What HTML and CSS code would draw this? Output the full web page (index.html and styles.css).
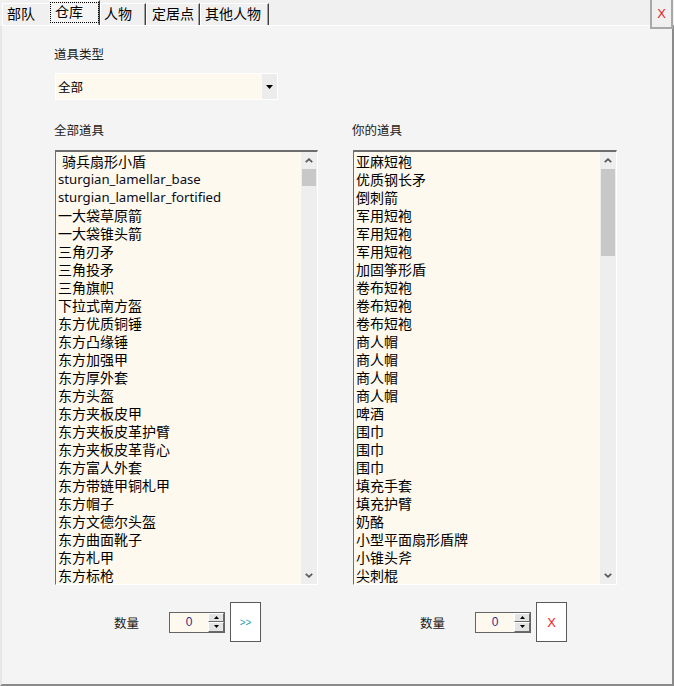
FILE: index.html
```html
<!DOCTYPE html>
<html lang="zh">
<head>
<meta charset="utf-8">
<title>仓库</title>
<link rel="stylesheet" href="styles.css">
</head>
<body>
<div class="window">
  <div class="tabbar">
    <div class="tab tab-1">部队</div>
    <div class="tab tab-2 active"><span class="focus">仓库</span></div>
    <div class="tab tab-3">人物</div>
    <div class="tab tab-4">定居点</div>
    <div class="tab tab-5">其他人物</div>
  </div>
  <button class="close">X</button>
  <div class="panel">
    <div class="filter">
      <div class="label">道具类型</div>
      <div class="select">
        <span class="select-value">全部</span>
        <span class="select-arrow"><svg width="7" height="4" viewBox="0 0 7 4"><path d="M0 0H7L3.5 4Z" fill="#000"/></svg></span>
      </div>
    </div>
    <div class="columns">
      <div class="column">
        <div class="label">全部道具</div>
        <div class="listbox">
          <ul class="items">
            <li> 骑兵扇形小盾</li>
            <li class="lat">sturgian_lamellar_base</li>
            <li class="lat">sturgian_lamellar_fortified</li>
            <li>一大袋草原箭</li>
            <li>一大袋锥头箭</li>
            <li>三角刃矛</li>
            <li>三角投矛</li>
            <li>三角旗帜</li>
            <li>下拉式南方盔</li>
            <li>东方优质铜锤</li>
            <li>东方凸缘锤</li>
            <li>东方加强甲</li>
            <li>东方厚外套</li>
            <li>东方头盔</li>
            <li>东方夹板皮甲</li>
            <li>东方夹板皮革护臂</li>
            <li>东方夹板皮革背心</li>
            <li>东方富人外套</li>
            <li>东方带链甲铜札甲</li>
            <li>东方帽子</li>
            <li>东方文德尔头盔</li>
            <li>东方曲面靴子</li>
            <li>东方札甲</li>
            <li>东方标枪</li>
          </ul>
          <div class="scrollbar">
            <div class="sb-btn"><svg width="8" height="5" viewBox="0 0 8 5"><path d="M0.8 4.2L4 1.2L7.2 4.2" fill="none" stroke="#5a5a5a" stroke-width="1.8"/></svg></div>
            <div class="track"><div class="thumb" style="height:17px"></div></div>
            <div class="sb-btn"><svg width="8" height="5" viewBox="0 0 8 5"><path d="M0.8 0.8L4 3.8L7.2 0.8" fill="none" stroke="#5a5a5a" stroke-width="1.8"/></svg></div>
          </div>
        </div>
        <div class="qty qty-left">
          <span class="qty-label">数量</span>
          <div class="spinner">
            <span class="spin-value">0</span>
            <div class="spin-btns">
              <span class="spin-btn"><svg width="5" height="3" viewBox="0 0 5 3"><path d="M0 3H5L2.5 0Z" fill="#000"/></svg></span>
              <span class="spin-btn"><svg width="5" height="3" viewBox="0 0 5 3"><path d="M0 0H5L2.5 3Z" fill="#000"/></svg></span>
            </div>
          </div>
          <button class="action action-move">&gt;&gt;</button>
        </div>
      </div>
      <div class="column">
        <div class="label">你的道具</div>
        <div class="listbox">
          <ul class="items">
            <li>亚麻短袍</li>
            <li>优质钢长矛</li>
            <li>倒刺箭</li>
            <li>军用短袍</li>
            <li>军用短袍</li>
            <li>军用短袍</li>
            <li>加固筝形盾</li>
            <li>卷布短袍</li>
            <li>卷布短袍</li>
            <li>卷布短袍</li>
            <li>商人帽</li>
            <li>商人帽</li>
            <li>商人帽</li>
            <li>商人帽</li>
            <li>啤酒</li>
            <li>围巾</li>
            <li>围巾</li>
            <li>围巾</li>
            <li>填充手套</li>
            <li>填充护臂</li>
            <li>奶酪</li>
            <li>小型平面扇形盾牌</li>
            <li>小锥头斧</li>
            <li>尖刺棍</li>
          </ul>
          <div class="scrollbar">
            <div class="sb-btn"><svg width="8" height="5" viewBox="0 0 8 5"><path d="M0.8 4.2L4 1.2L7.2 4.2" fill="none" stroke="#5a5a5a" stroke-width="1.8"/></svg></div>
            <div class="track"><div class="thumb" style="height:87px"></div></div>
            <div class="sb-btn"><svg width="8" height="5" viewBox="0 0 8 5"><path d="M0.8 0.8L4 3.8L7.2 0.8" fill="none" stroke="#5a5a5a" stroke-width="1.8"/></svg></div>
          </div>
        </div>
        <div class="qty qty-right">
          <span class="qty-label">数量</span>
          <div class="spinner">
            <span class="spin-value">0</span>
            <div class="spin-btns">
              <span class="spin-btn"><svg width="5" height="3" viewBox="0 0 5 3"><path d="M0 3H5L2.5 0Z" fill="#000"/></svg></span>
              <span class="spin-btn"><svg width="5" height="3" viewBox="0 0 5 3"><path d="M0 0H5L2.5 3Z" fill="#000"/></svg></span>
            </div>
          </div>
          <button class="action action-remove">X</button>
        </div>
      </div>
    </div>
  </div>
</div>
</body>
</html>
```
FILE: styles.css
```css
* { box-sizing: border-box; }
html, body { margin: 0; padding: 0; }
body {
  width: 674px;
  height: 686px;
  background: #f0f0f0;
  font-family: "Liberation Sans", "Noto Sans CJK SC", sans-serif;
  color: #000;
  overflow: hidden;
}
.window {
  position: relative;
  width: 674px;
  height: 686px;
  display: flex;
  flex-direction: column;
}
.tabbar {
  height: 25px;
  display: flex;
  align-items: flex-end;
  padding-left: 2px;
  font-size: 14px;
}
.tab {
  height: 22px;
  line-height: 20px;
  background: #f0f0f0;
  border-top: 1px solid #ffffff;
  border-left: 1px solid #ffffff;
  border-right: 1px solid #404040;
  box-shadow: inset -1px 0 0 #a0a0a0;
  padding-left: 4px;
  white-space: nowrap;
  color: #000;
}
.tab-1 { width: 47px; padding-left: 4px; border-right: none; box-shadow: none; }
.tab-2 { width: 51px; }
.tab-3 { width: 46px; padding-left: 3px; }
.tab-4 { width: 54px; padding-left: 5px; }
.tab-5 { width: 69px; padding-left: 4px; }
.tab.active {
  height: 25px;
  line-height: 20px;
  background: #f4f4f4;
  padding: 1px 0 2px 1px;
  border-left: none;
}
.focus {
  display: block;
  height: 21px;
  border: 1px dotted #000;
  padding-left: 4px;
  line-height: 19px;
}
.close {
  position: absolute;
  left: 650px;
  top: 0;
  width: 23px;
  height: 29px;
  border: 2px solid #a8a8a8;
  border-top: none;
  background: #f0f0f0;
  color: #e02424;
  font-family: "Liberation Sans", sans-serif;
  font-size: 13px;
  padding: 0;
  z-index: 2;
}
.panel {
  flex: 1;
  background: #f4f4f4;
  border-top: 1px solid #ffffff;
  border-left: 2px solid #e6e6e6;
  border-right: 2px solid #8a8a8a;
  border-bottom: 2px solid #8a8a8a;
  padding: 21px 0 0 53px;
}
.label {
  font-size: 12.5px;
  line-height: 16px;
  color: #1a1a1a;
  margin-left: -1px;
}
.filter .select {
  margin-top: 10px;
  width: 223px;
  height: 27px;
  border: 1px solid #ffffff;
  background: #fdf9ee;
  display: flex;
  align-items: center;
}
.select-value {
  flex: 1;
  font-size: 12.5px;
  padding-left: 2px;
}
.select-arrow {
  width: 15px;
  height: 25px;
  background: #ececec;
  display: flex;
  align-items: center;
  justify-content: center;
}
.columns {
  margin-top: 23px;
  display: grid;
  grid-template-columns: 263px 264px;
  column-gap: 35px;
}
.listbox {
  margin-top: 11px;
  height: 435px;
  display: flex;
  background: #fdf9ee;
  border-top: 2px solid #6e6e6e;
  border-left: 1px solid #6e6e6e;
  border-right: 1px solid #ffffff;
  border-bottom: 1px solid #ffffff;
}
.items {
  flex: 1;
  list-style: none;
  margin: 0;
  padding: 0 0 0 2px;
  overflow: hidden;
}
.items li {
  height: 18px;
  line-height: 18px;
  font-size: 14px;
  white-space: pre;
  padding-top: 1px;
}
.items li.lat {
  font-family: "Noto Sans", sans-serif;
  font-size: 13.2px;
  line-height: 17px;
  padding-top: 1px;
  color: #0a0a1a;
}
.scrollbar {
  width: 16px;
  background: #eeeeee;
  display: flex;
  flex-direction: column;
}
.sb-btn {
  height: 17px;
  display: flex;
  align-items: center;
  justify-content: center;
}
.track {
  flex: 1;
  padding: 0 1px;
}
.thumb {
  background: #c8c8c8;
}
.qty {
  margin-top: 17px;
  height: 40px;
  display: flex;
  align-items: center;
}
.qty-label {
  font-size: 12.5px;
  color: #1a1a1a;
}
.qty-left .qty-label { margin-left: 59px; }
.qty-right .qty-label { margin-left: 67px; }
.spinner {
  margin-left: 30px;
  width: 56px;
  height: 21px;
  border: 1px solid #646464;
  background: #fdf9ee;
  display: flex;
}
.spin-value {
  flex: 1;
  text-align: center;
  font-family: "Liberation Sans", sans-serif;
  font-size: 12px;
  line-height: 19px;
  color: #3a2a8a;
}
.spin-btns {
  width: 16px;
  display: flex;
  flex-direction: column;
}
.spin-btn {
  flex: 1;
  background: #e4e4e4;
  border-top: 1px solid #ffffff;
  border-left: 1px solid #ffffff;
  border-right: 1px solid #6a6a6a;
  border-bottom: 1px solid #6a6a6a;
  display: flex;
  align-items: center;
  justify-content: center;
}
.action {
  margin-left: 5px;
  width: 31px;
  height: 40px;
  border: 1px solid #5a5a5a;
  background: #ffffff;
  padding: 0;
  font-family: "Liberation Sans", sans-serif;
}
.action-move {
  color: #2a9fb0;
  font-size: 10px;
}
.action-remove {
  color: #f02020;
  font-size: 13px;
}
```
